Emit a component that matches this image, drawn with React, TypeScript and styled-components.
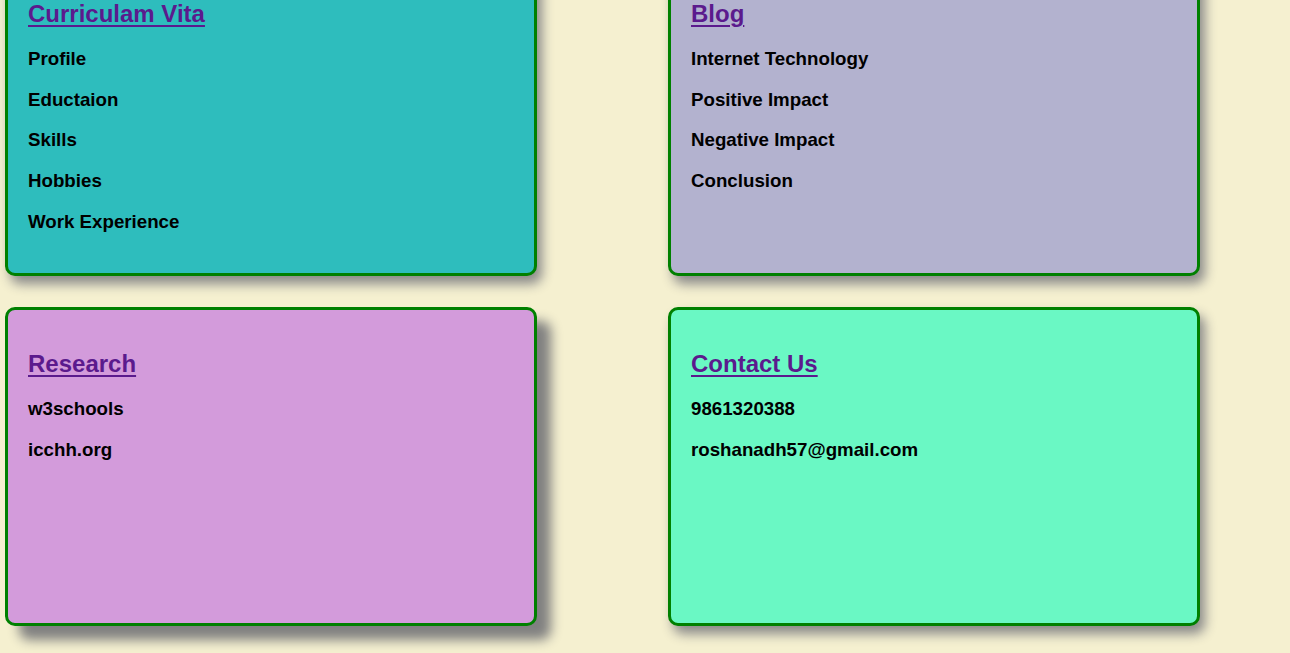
import styled, { createGlobalStyle } from "styled-components";

const GlobalStyle = createGlobalStyle`
    html, body {
        margin: 0;
        padding: 0;
        background: #f5f0d0;
        font-family: "Liberation Sans", Arial, sans-serif;
        overflow: hidden;
    }
`

const Page = styled.div`
    display: grid;
    grid-template-columns: 532px 532px;
    align-items: start;
    column-gap: 131px;
    row-gap: 31px;
    padding: 0 0 27px 5px;
    margin-top: -43px;
`

const Card = styled.section<{ $bg: string; $lifted?: boolean }>`
    box-sizing: border-box;
    height: 319px;
    padding: 40px 20px 20px;
    background: ${(p) => p.$bg};
    border: 3px solid #008000;
    border-radius: 10px;
    box-shadow: ${(p) => (p.$lifted ? "14px 14px 12px #808080" : "5px 8px 12px #8a8a8a")};
`

const Title = styled.a`
    display: inline-block;
    font-size: 24px;
    font-weight: bold;
    color: #5b1a8d;
    text-decoration: underline;
    text-decoration-thickness: 2px;
    text-underline-offset: 3px;
    margin-bottom: 11px;
`

const Item = styled.p`
    margin: 0;
    font-size: 18.72px;
    font-weight: bold;
    color: #000;
    line-height: 40.7px;
`

const sections = [
    { title: "Curriculam Vita", bg: "#2ebdbd", items: ["Profile", "Eductaion", "Skills", "Hobbies", "Work Experience"] },
    { title: "Blog", bg: "#b3b2cf", items: ["Internet Technology", "Positive Impact", "Negative Impact", "Conclusion"] },
    { title: "Research", bg: "#d39bdb", items: ["w3schools", "icchh.org"], lifted: true },
    { title: "Contact Us", bg: "#6af8c4", items: ["9861320388", "roshanadh57@gmail.com"] },
];

const App = () => {
    return (
        <>
            <GlobalStyle />
            <Page>
                {sections.map((s) => (
                    <Card key={s.title} $bg={s.bg} $lifted={s.lifted}>
                        <Title href="#">{s.title}</Title>
                        {s.items.map((it) => (
                            <Item key={it}>{it}</Item>
                        ))}
                    </Card>
                ))}
            </Page>
        </>
    )
}

export default App;
